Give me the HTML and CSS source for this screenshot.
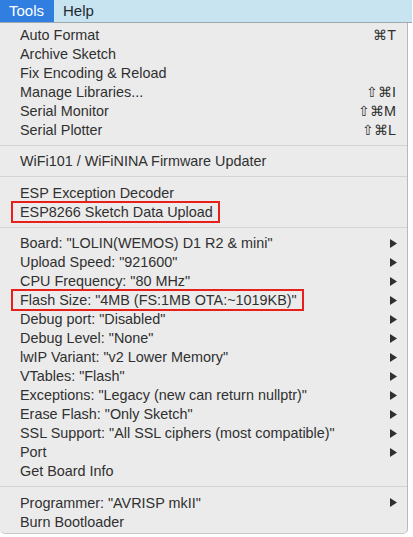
FILE: index.html
```html
<!DOCTYPE html>
<html>
<head>
<meta charset="utf-8">
<link rel="stylesheet" href="styles.css">
</head>
<body>
<div class="menubar">
  <span class="mb-item active">Tools</span>
  <span class="mb-item">Help</span>
</div>
<div class="menu">
  <div class="item"><span>Auto Format</span><span class="sc">⌘T</span></div>
  <div class="item"><span>Archive Sketch</span></div>
  <div class="item"><span>Fix Encoding &amp; Reload</span></div>
  <div class="item"><span>Manage Libraries...</span><span class="sc">⇧⌘I</span></div>
  <div class="item"><span>Serial Monitor</span><span class="sc">⇧⌘M</span></div>
  <div class="item"><span>Serial Plotter</span><span class="sc">⇧⌘L</span></div>
  <div class="sep"></div>
  <div class="item"><span>WiFi101 / WiFiNINA Firmware Updater</span></div>
  <div class="sep"></div>
  <div class="item"><span>ESP Exception Decoder</span></div>
  <div class="item"><span class="mark">ESP8266 Sketch Data Upload</span></div>
  <div class="sep"></div>
  <div class="item sub"><span>Board: "LOLIN(WEMOS) D1 R2 &amp; mini"</span><svg class="arrow" viewBox="0 0 7 9"><path d="M0 0L7 4.5L0 9Z"/></svg></div>
  <div class="item sub"><span>Upload Speed: "921600"</span><svg class="arrow" viewBox="0 0 7 9"><path d="M0 0L7 4.5L0 9Z"/></svg></div>
  <div class="item sub"><span>CPU Frequency: "80 MHz"</span><svg class="arrow" viewBox="0 0 7 9"><path d="M0 0L7 4.5L0 9Z"/></svg></div>
  <div class="item sub"><span class="mark">Flash Size: "4MB (FS:1MB OTA:~1019KB)"</span><svg class="arrow" viewBox="0 0 7 9"><path d="M0 0L7 4.5L0 9Z"/></svg></div>
  <div class="item sub"><span>Debug port: "Disabled"</span><svg class="arrow" viewBox="0 0 7 9"><path d="M0 0L7 4.5L0 9Z"/></svg></div>
  <div class="item sub"><span>Debug Level: "None"</span><svg class="arrow" viewBox="0 0 7 9"><path d="M0 0L7 4.5L0 9Z"/></svg></div>
  <div class="item sub"><span>lwIP Variant: "v2 Lower Memory"</span><svg class="arrow" viewBox="0 0 7 9"><path d="M0 0L7 4.5L0 9Z"/></svg></div>
  <div class="item sub"><span>VTables: "Flash"</span><svg class="arrow" viewBox="0 0 7 9"><path d="M0 0L7 4.5L0 9Z"/></svg></div>
  <div class="item sub"><span>Exceptions: "Legacy (new can return nullptr)"</span><svg class="arrow" viewBox="0 0 7 9"><path d="M0 0L7 4.5L0 9Z"/></svg></div>
  <div class="item sub"><span>Erase Flash: "Only Sketch"</span><svg class="arrow" viewBox="0 0 7 9"><path d="M0 0L7 4.5L0 9Z"/></svg></div>
  <div class="item sub"><span>SSL Support: "All SSL ciphers (most compatible)"</span><svg class="arrow" viewBox="0 0 7 9"><path d="M0 0L7 4.5L0 9Z"/></svg></div>
  <div class="item sub"><span>Port</span><svg class="arrow" viewBox="0 0 7 9"><path d="M0 0L7 4.5L0 9Z"/></svg></div>
  <div class="item"><span>Get Board Info</span></div>
  <div class="sep"></div>
  <div class="item sub"><span>Programmer: "AVRISP mkII"</span><svg class="arrow" viewBox="0 0 7 9"><path d="M0 0L7 4.5L0 9Z"/></svg></div>
  <div class="item"><span>Burn Bootloader</span></div>
</div>
</body>
</html>
```

FILE: styles.css
```css
html, body {
  margin: 0;
  padding: 0;
  background: #ffffff;
  width: 413px;
  height: 537px;
  overflow: hidden;
  font-family: "Liberation Sans", Arial, sans-serif;
  color: #303030;
}
.menubar {
  height: 22px;
  background: #c8e4f0;
  border-bottom: 1px solid #9ea8ad;
  display: flex;
  align-items: stretch;
  width: 412px;
}
.mb-item {
  font-size: 15px;
  line-height: 22px;
  padding: 0 8px 0 9px;
  color: #1e2a30;
}
.mb-item.active {
  background: #2f7ee0;
  color: #ffffff;
  width: 37px;
}
.menu {
  width: 408px;
  background: #ebebeb;
  border-right: 1px solid #b8b8b8;
  border-bottom: 1px solid #c8c8c8;
  border-bottom-right-radius: 5px;
  border-bottom-left-radius: 5px;
  padding: 2px 0 2px;
  box-sizing: border-box;
}
.item {
  height: 19px;
  display: flex;
  align-items: center;
  justify-content: space-between;
  padding: 0 11px 0 20px;
  font-size: 14.4px;
  white-space: nowrap;
}
.item.sub {
  padding-right: 10px;
}
.sc {
  font-size: 14.4px;
  color: #303030;
}
.arrow {
  width: 7px;
  height: 9px;
  fill: #303030;
}
.sep {
  height: 1px;
  background: #d4d4d4;
  margin: 5.5px 0 6px;
}
.mark {
  border: 2px solid #e8201c;
  padding: 1px 5px 1px 7px;
  margin-left: -9px;
}
```
